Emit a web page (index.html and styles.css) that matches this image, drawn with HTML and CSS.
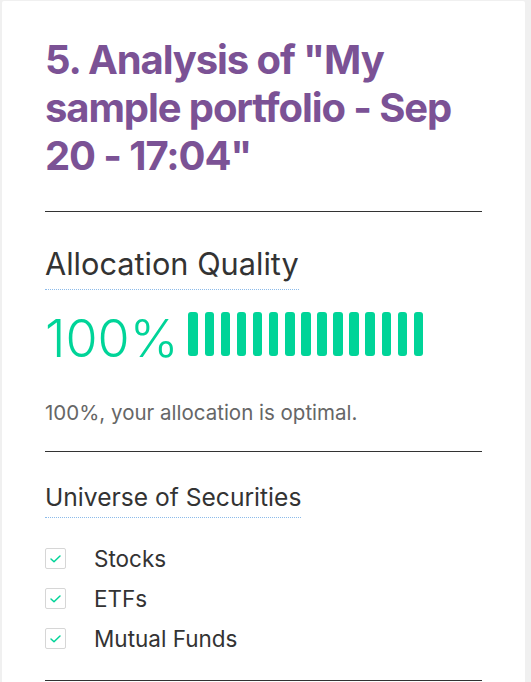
FILE: index.html
```html
<!DOCTYPE html>
<html>
<head>
<meta charset="utf-8">
<link rel="stylesheet" href="styles.css">
</head>
<body>
<div class="card">
  <h1 class="title">5. Analysis of "My sample portfolio - Sep 20 - 17:04"</h1>
  <hr class="rule rule-top">
  <section class="section section-quality">
    <h2 class="heading heading-lg">Allocation Quality</h2>
    <div class="quality">
      <span class="pct">100%</span>
      <div class="bars">
        <span class="bar"></span><span class="bar"></span><span class="bar"></span><span class="bar"></span><span class="bar"></span>
        <span class="bar"></span><span class="bar"></span><span class="bar"></span><span class="bar"></span><span class="bar"></span>
        <span class="bar"></span><span class="bar"></span><span class="bar"></span><span class="bar"></span><span class="bar"></span>
      </div>
    </div>
    <p class="note">100%, your allocation is optimal.</p>
  </section>
  <hr class="rule">
  <section class="section section-universe">
    <h2 class="heading heading-md">Universe of Securities</h2>
    <ul class="checks">
      <li class="check-row"><span class="box"><svg viewBox="0 0 19 19" width="19" height="19"><path d="M5 10 L8 12.8 L14 7" fill="none" stroke="#00d498" stroke-width="1.5" stroke-linecap="round" stroke-linejoin="round"/></svg></span><span class="label">Stocks</span></li>
      <li class="check-row"><span class="box"><svg viewBox="0 0 19 19" width="19" height="19"><path d="M5 10 L8 12.8 L14 7" fill="none" stroke="#00d498" stroke-width="1.5" stroke-linecap="round" stroke-linejoin="round"/></svg></span><span class="label">ETFs</span></li>
      <li class="check-row"><span class="box"><svg viewBox="0 0 19 19" width="19" height="19"><path d="M5 10 L8 12.8 L14 7" fill="none" stroke="#00d498" stroke-width="1.5" stroke-linecap="round" stroke-linejoin="round"/></svg></span><span class="label">Mutual Funds</span></li>
    </ul>
  </section>
  <hr class="rule">
</div>
</body>
</html>
```
FILE: styles.css
```css
html, body {
  margin: 0;
  padding: 0;
}
body {
  background: #f0f0f0;
  font-family: Inter, "Noto Sans", sans-serif;
  color: #333;
}
.card {
  margin: 1px 0 0 2px;
  width: 523px;
  box-sizing: border-box;
  background: #fff;
  padding: 35px 43px 20px 43px;
  border-radius: 2px;
}
.title {
  margin: 0;
  font-size: 40px;
  line-height: 48px;
  font-weight: 700;
  color: #7b5295;
  letter-spacing: -1.1px;
}
.rule {
  margin: 0;
  border: 0;
  border-top: 1px solid #333;
}
.rule-top {
  margin-top: 31px;
}
.section-quality {
  padding: 32px 0 26px;
}
.section-universe {
  padding: 28px 0 31px;
}
.heading {
  display: inline-block;
  margin: 0;
  font-weight: 400;
  color: #333;
  border-bottom: 1px dotted #8cbbea;
}
.heading-lg {
  font-size: 30.7px;
  line-height: 40px;
  padding-bottom: 5px;
}
.heading-md {
  font-size: 24.6px;
  line-height: 34px;
  padding-bottom: 3px;
}
.quality {
  display: flex;
  align-items: flex-end;
  gap: 10px;
  margin-top: 22px;
}
.pct {
  font-size: 52px;
  line-height: 52px;
  font-weight: 300;
  color: #00d498;
}
.bars {
  display: flex;
  gap: 6.6px;
  margin-bottom: 9px;
}
.bar {
  width: 9.5px;
  height: 44px;
  background: #00d498;
  border-radius: 3px;
}
.note {
  margin: 36px 0 0;
  font-size: 20.5px;
  line-height: 24px;
  color: #666;
}
.checks {
  list-style: none;
  margin: 30px 0 0;
  padding: 0;
  display: flex;
  flex-direction: column;
  gap: 19px;
}
.check-row {
  display: flex;
  align-items: center;
  gap: 28px;
}
.box {
  width: 21px;
  height: 21px;
  box-sizing: border-box;
  border: 1px solid #d6d6d6;
  border-radius: 2px;
  display: flex;
}
.label {
  font-size: 22.5px;
  line-height: 21px;
  color: #333;
}
```
